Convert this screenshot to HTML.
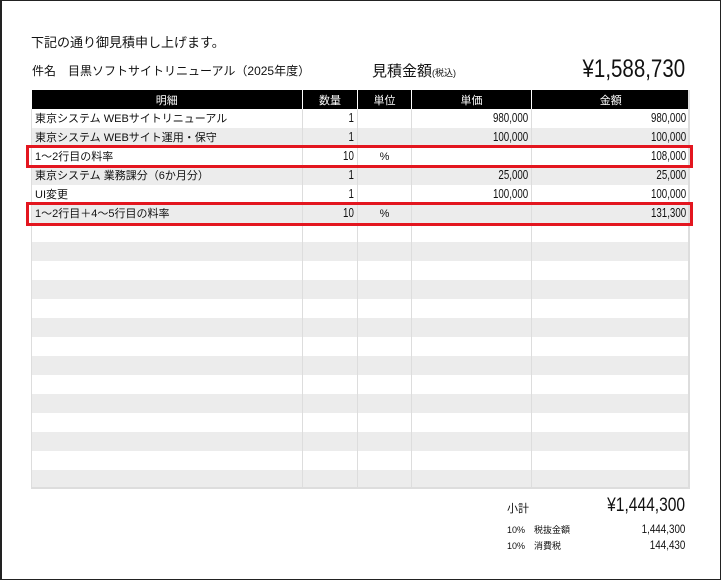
<!DOCTYPE html>
<html><head><meta charset="utf-8"><style>
*{margin:0;padding:0;box-sizing:border-box}
body{width:722px;height:582px;background:#fff;font-family:"Liberation Sans","Noto Sans CJK JP",sans-serif;color:#111;position:relative;overflow:hidden}
.frame{position:absolute;left:0;top:0;width:721px;height:580px;border:1px solid #222;border-left:2px solid #222}
.a{position:absolute;white-space:nowrap}
.n{display:inline-block;transform:scaleX(0.82);transform-origin:right center}
table{position:absolute;left:31px;top:90px;width:658px;border-collapse:collapse;font-size:11px;table-layout:fixed}
th{background:#000;color:#fff;font-weight:normal;height:19px;border-left:1px solid #fff;font-size:11px}
th:first-child{border-left:none}
td{height:19px;border-left:1px solid #ddd;padding:0 3px;line-height:18px;white-space:nowrap}
td .n{font-size:12.5px;transform:scaleX(0.78)}
tr:nth-child(odd) td{background:#ececec}
td.r{text-align:right}td.c{text-align:center}
.box{position:absolute;border:3px solid #e3161f}
</style></head><body>
<div class="frame"></div>
<div class="a" style="left:31px;top:32px;font-size:13px">下記の通り御見積申し上げます。</div>
<div class="a" style="left:32px;top:62px;font-size:12px">件名　目黒ソフトサイトリニューアル（2025年度）</div>
<div class="a" style="left:372px;top:60px;font-size:15px">見積金額<span style="font-size:9px">(税込)</span></div>
<div class="a" style="right:37px;top:55px;font-size:25px"><span class="n">¥1,588,730</span></div>
<table>
<colgroup><col style="width:271px"><col style="width:55px"><col style="width:54px"><col style="width:120px"><col style="width:158px"></colgroup>
<tr><th>明細</th><th>数量</th><th>単位</th><th>単価</th><th>金額</th></tr>
<tr><td>東京システム WEBサイトリニューアル</td><td class="r"><span class="n">1</span></td><td></td><td class="r"><span class="n">980,000</span></td><td class="r"><span class="n">980,000</span></td></tr>
<tr><td>東京システム WEBサイト運用・保守</td><td class="r"><span class="n">1</span></td><td></td><td class="r"><span class="n">100,000</span></td><td class="r"><span class="n">100,000</span></td></tr>
<tr><td>1～2行目の料率</td><td class="r"><span class="n">10</span></td><td class="c">%</td><td></td><td class="r"><span class="n">108,000</span></td></tr>
<tr><td>東京システム 業務課分（6か月分）</td><td class="r"><span class="n">1</span></td><td></td><td class="r"><span class="n">25,000</span></td><td class="r"><span class="n">25,000</span></td></tr>
<tr><td>UI変更</td><td class="r"><span class="n">1</span></td><td></td><td class="r"><span class="n">100,000</span></td><td class="r"><span class="n">100,000</span></td></tr>
<tr><td>1～2行目＋4～5行目の料率</td><td class="r"><span class="n">10</span></td><td class="c">%</td><td></td><td class="r"><span class="n">131,300</span></td></tr>
<tr><td></td><td></td><td></td><td></td><td></td></tr>
<tr><td></td><td></td><td></td><td></td><td></td></tr>
<tr><td></td><td></td><td></td><td></td><td></td></tr>
<tr><td></td><td></td><td></td><td></td><td></td></tr>
<tr><td></td><td></td><td></td><td></td><td></td></tr>
<tr><td></td><td></td><td></td><td></td><td></td></tr>
<tr><td></td><td></td><td></td><td></td><td></td></tr>
<tr><td></td><td></td><td></td><td></td><td></td></tr>
<tr><td></td><td></td><td></td><td></td><td></td></tr>
<tr><td></td><td></td><td></td><td></td><td></td></tr>
<tr><td></td><td></td><td></td><td></td><td></td></tr>
<tr><td></td><td></td><td></td><td></td><td></td></tr>
<tr><td></td><td></td><td></td><td></td><td></td></tr>
<tr><td></td><td></td><td></td><td></td><td></td></tr>
</table>
<div class="a" style="left:31px;top:487px;width:658px;height:2px;background:#ddd"></div>
<div class="a" style="left:688px;top:90px;width:2px;height:399px;background:#ddd"></div>
<div class="box" style="left:26px;top:145px;width:667px;height:23px"></div>
<div class="box" style="left:26px;top:202px;width:667px;height:24px"></div>
<div class="a" style="left:507px;top:500px;font-size:11px">小計</div>
<div class="a" style="right:37px;top:495px;font-size:19px"><span class="n">¥1,444,300</span></div>
<div class="a" style="left:507px;top:523px;font-size:9px">10%　税抜金額</div>
<div class="a" style="right:37px;top:522px;font-size:12px"><span class="n">1,444,300</span></div>
<div class="a" style="left:507px;top:539px;font-size:9px">10%　消費税</div>
<div class="a" style="right:37px;top:538px;font-size:12px"><span class="n">144,430</span></div>
</body></html>
